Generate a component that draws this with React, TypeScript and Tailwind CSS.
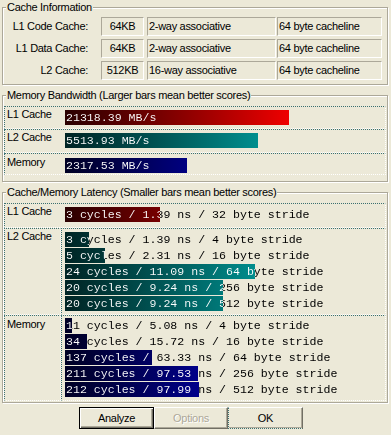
import React from "react";

type Tone = "red" | "teal" | "blue";

// gradient is laid on a fixed scale, each bar only shows its own share of it
const tones: Record<Tone, string> = {
  red: "bg-linear-to-r from-[#2a0000] to-[#ff0000]",
  teal: "bg-linear-to-r from-[#002424] to-[#00abab]",
  blue: "bg-linear-to-r from-[#000024] to-[#0000e8]",
};

const cell =
  "border border-dotted border-t-[#3b7070] border-l-[#3b7070] border-r-white border-b-white";

function Bar({ text, width, tone }: { text: string; width: number; tone: Tone }) {
  return (
    <div className="relative h-[15px] font-['Liberation_Mono','Courier_New',monospace] text-[11.6px] leading-[15px] tracking-normal">
      <div className="absolute left-0 top-0 h-full overflow-hidden" style={{ width }}>
        <div className={`h-full w-[240px] ${tones[tone]}`} />
      </div>
      {/* text is white over the bar and black past its end */}
      <div
        className="relative whitespace-pre bg-clip-text pl-[1px] text-transparent"
        style={{ backgroundImage: `linear-gradient(to right, #fff ${width}px, #000 ${width}px)` }}
      >
        {text}
      </div>
    </div>
  );
}

function InfoRow({ label, size, assoc, line }: { label: string; size: string; assoc: string; line: string }) {
  const box =
    "flex h-[19px] items-center border border-t-[#aca899] border-l-[#aca899] border-r-white border-b-white";
  return (
    <div className="flex h-[19px] items-center">
      <div className="w-[85px] text-right">{label}</div>
      <div className={`${box} ml-[13px] w-[43px] justify-center`}>{size}</div>
      <div className={`${box} ml-[3px] w-[129px] pl-[1px]`}>{assoc}</div>
      <div className={`${box} ml-[1px] w-[105px] pl-[1px]`}>{line}</div>
    </div>
  );
}

function Group({ title, className, children }: { title: string; className?: string; children: React.ReactNode }) {
  return (
    <fieldset
      className={`border border-[#aca899] shadow-[inset_1px_1px_0_#fff,1px_1px_0_#fff] ${className ?? ""}`}
    >
      <legend className="ml-[3px] bg-[#ece9d8] px-[1px]">{title}</legend>
      {children}
    </fieldset>
  );
}

const l2Rows = [
  { text: "3 cycles / 1.39 ns / 4 byte stride", w: 24 },
  { text: "5 cycles / 2.31 ns / 16 byte stride", w: 40 },
  { text: "24 cycles / 11.09 ns / 64 byte stride", w: 190 },
  { text: "20 cycles / 9.24 ns / 256 byte stride", w: 158 },
  { text: "20 cycles / 9.24 ns / 512 byte stride", w: 158 },
];

const memRows = [
  { text: "11 cycles / 5.08 ns / 4 byte stride", w: 7 },
  { text: "34 cycles / 15.72 ns / 16 byte stride", w: 22 },
  { text: "137 cycles / 63.33 ns / 64 byte stride", w: 87 },
  { text: "211 cycles / 97.53 ns / 256 byte stride", w: 133 },
  { text: "212 cycles / 97.99 ns / 512 byte stride", w: 134 },
];

export default function App() {
  return (
    <div className="flex h-[435px] w-[391px] flex-col overflow-hidden bg-[#ece9d8] pl-[2px] pr-[3px] font-['Liberation_Sans',Arial,sans-serif] text-[11px] leading-[13px] tracking-[-0.3px] text-black">
      <Group title="Cache Information" className="mt-[1px]">
        <div className="flex flex-col gap-[3px] pt-[3px] pb-[4px]">
          <InfoRow label="L1 Code Cache:" size="64KB" assoc="2-way associative" line="64 byte cacheline" />
          <InfoRow label="L1 Data Cache:" size="64KB" assoc="2-way associative" line="64 byte cacheline" />
          <InfoRow label="L2 Cache:" size="512KB" assoc="16-way associative" line="64 byte cacheline" />
        </div>
      </Group>

      <Group title="Memory Bandwidth (Larger bars mean better scores)" className="mt-[4px]">
        <div className="flex flex-col px-[1px] pt-[4px] pb-[6px]">
          <div className={`${cell} flex h-[23px]`}>
            <div className="w-[60px] pl-[2px] pt-[1px]">L1 Cache</div>
            <div className="mt-[3px]">
              <Bar text="21318.39 MB/s" width={224} tone="red" />
            </div>
          </div>
          <div className={`${cell} flex h-[24px]`}>
            <div className="w-[60px] pl-[2px] pt-[1px]">L2 Cache</div>
            <div className="mt-[3px]">
              <Bar text="5513.93 MB/s" width={193} tone="teal" />
            </div>
          </div>
          <div className={`${cell} flex h-[22px]`}>
            <div className="w-[60px] pl-[2px] pt-[2px]">Memory</div>
            <div className="mt-[4px]">
              <Bar text="2317.53 MB/s" width={122} tone="blue" />
            </div>
          </div>
        </div>
      </Group>

      <Group title="Cache/Memory Latency (Smaller bars mean better scores)" className="mt-[4px]">
        <div className="flex flex-col px-[1px] pt-[4px] pb-[1px]">
          <div className={`${cell} flex h-[25px]`}>
            <div className="w-[60px] pl-[2px] pt-[1px]">L1 Cache</div>
            <div className="mt-[3px]">
              <Bar text="3 cycles / 1.39 ns / 32 byte stride" width={95} tone="red" />
            </div>
          </div>
          <div className="flex h-[87px]">
            <div className={`${cell} w-[57px] pl-[2px] pt-[1px]`}>L2 Cache</div>
            <div className={`${cell} flex flex-1 flex-col gap-[1px] pl-[3px] pt-[3px]`}>
              {l2Rows.map((r) => (
                <Bar key={r.text} text={r.text} width={r.w} tone="teal" />
              ))}
            </div>
          </div>
          <div className="flex h-[86px]">
            <div className={`${cell} w-[57px] pl-[2px] pt-[2px]`}>Memory</div>
            <div className={`${cell} flex flex-1 flex-col gap-[1px] pl-[3px] pt-[2px]`}>
              {memRows.map((r) => (
                <Bar key={r.text} text={r.text} width={r.w} tone="blue" />
              ))}
            </div>
          </div>
        </div>
      </Group>

      <div className="mt-[4px] flex pl-[77px]">
        <button className="flex h-[22px] w-[75px] items-center justify-center border border-black shadow-[inset_1px_1px_0_#fff,inset_-1px_-1px_0_#716f64,inset_-2px_-2px_0_#aca899]">
          Analyze
        </button>
        <button
          disabled
          className="flex h-[22px] w-[74px] items-center justify-center border border-t-white border-l-white border-r-[#716f64] border-b-[#716f64] text-[#aca899] shadow-[inset_-1px_-1px_0_#aca899] [text-shadow:1px_1px_0_#fff]"
        >
          Options
        </button>
        <button className="flex h-[22px] w-[75px] items-center justify-center border border-t-white border-l-[#3b7070] border-r-[#716f64] border-b-[#3b7070] shadow-[inset_-1px_-1px_0_#aca899] [border-left-style:dotted] [border-bottom-style:dotted]">
          OK
        </button>
      </div>
    </div>
  );
}
